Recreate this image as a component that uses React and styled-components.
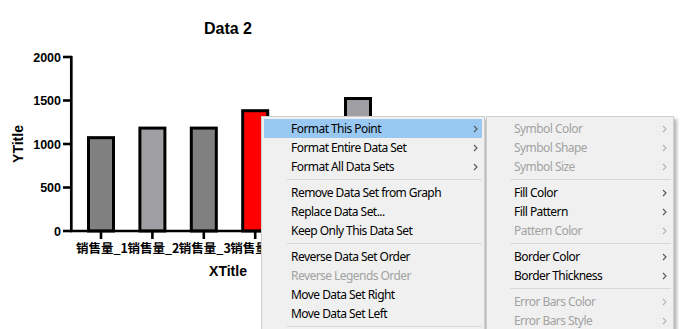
import React from "react"
import styled, { createGlobalStyle } from "styled-components"

const GlobalStyle = createGlobalStyle`
  html, body {
    margin: 0;
    padding: 0;
    background: #ffffff;
  }
`

const Stage = styled.div`
  position: relative;
  width: 680px;
  height: 329px;
  overflow: hidden;
  background: #ffffff;
`

const ChartSvg = styled.svg`
  display: block;
  font-family: "Liberation Sans", Arial, "Noto Sans CJK SC", sans-serif;
  font-weight: bold;
`

const Menu = styled.ul`
  position: absolute;
  top: ${(p) => p.$top}px;
  left: ${(p) => p.$left}px;
  width: ${(p) => p.$width}px;
  margin: 0;
  padding: 2px 2px 30px;
  list-style: none;
  box-sizing: border-box;
  background: #f0f0f0;
  border: 1px solid #cfcfcf;
  box-shadow: 3px 3px 3px rgba(0, 0, 0, 0.28);
  font-family: "Noto Sans", "Open Sans", sans-serif;
  font-size: 12px;
  letter-spacing: -0.55px;
`

const Item = styled.li`
  display: flex;
  align-items: center;
  justify-content: space-between;
  height: 19px;
  padding: 0 4px 0 ${(p) => p.$indent}px;
  color: ${(p) => (p.$disabled ? "#a2a2a2" : "#000000")};
  background: ${(p) => (p.$active ? "#99c9f3" : "transparent")};
  white-space: nowrap;
`

const Separator = styled.li`
  height: 1px;
  margin: 3px 0 3px ${(p) => p.$indent}px;
  background: #d9d9d9;
`

const Chevron = ({ disabled }) => (
  <svg width="5" height="8" viewBox="0 0 5 8">
    <path
      d="M1 1 L4 4 L1 7"
      fill="none"
      stroke={disabled ? "#b4b4b4" : "#555555"}
      strokeWidth="1.1"
    />
  </svg>
)

const yScale = (v) => 231 - v * 0.087

// the last two bars sit behind the context menu, their labels are hidden
const bars = [
  { label: "销售量_1", value: 1090, fill: "#808080" },
  { label: "销售量_2", value: 1200, fill: "#a0a0a4" },
  { label: "销售量_3", value: 1200, fill: "#808080" },
  { label: "销售量_4", value: 1400, fill: "#ff0000" },
  { value: 1000, fill: "#808080" },
  { value: 1540, fill: "#a0a0a4" },
]

function Chart() {
  const ticks = [0, 500, 1000, 1500, 2000]
  return (
    <ChartSvg width="680" height="329">
      <text x="228" y="34" fontSize="16" textAnchor="middle">
        Data 2
      </text>
      <text
        x="0"
        y="0"
        fontSize="14"
        textAnchor="middle"
        transform="translate(23 144) rotate(-90)"
      >
        YTitle
      </text>
      {ticks.map((t) => (
        <g key={t}>
          <line x1="63" x2="72" y1={yScale(t)} y2={yScale(t)} stroke="#000" strokeWidth="2.6" />
          <text x="61" y={yScale(t) + 4.5} fontSize="12.5" textAnchor="end">
            {t}
          </text>
        </g>
      ))}
      {bars.map((b, i) => {
        const cx = 101 + i * 51.4
        const top = yScale(b.value)
        return (
          <g key={i}>
            <rect
              x={cx - 12.5}
              y={top + 1.5}
              width="25"
              height={231 - top - 1.5}
              fill={b.fill}
              stroke="#000"
              strokeWidth="3"
            />
            <line x1={cx} x2={cx} y1="231" y2="239" stroke="#000" strokeWidth="2.6" />
            {b.label && (
              <text
                x={cx + 1}
                y="253"
                fontSize="12.5"
                textAnchor="middle"
                fontFamily='"Noto Sans CJK SC", "Liberation Sans", sans-serif'
              >
                {b.label}
              </text>
            )}
          </g>
        )
      })}
      <line x1="71.3" x2="71.3" y1="56" y2="232" stroke="#000" strokeWidth="2.7" />
      <line x1="70" x2="420" y1="231" y2="231" stroke="#000" strokeWidth="2.7" />
      <text x="228" y="276" fontSize="14" textAnchor="middle">
        XTitle
      </text>
    </ChartSvg>
  )
}

const mainMenu = [
  { label: "Format This Point", sub: true, active: true },
  { label: "Format Entire Data Set", sub: true },
  { label: "Format All Data Sets", sub: true },
  "sep",
  { label: "Remove Data Set from Graph" },
  { label: "Replace Data Set..." },
  { label: "Keep Only This Data Set" },
  "sep",
  { label: "Reverse Data Set Order" },
  { label: "Reverse Legends Order", disabled: true },
  { label: "Move Data Set Right" },
  { label: "Move Data Set Left" },
  "sep",
]

const subMenu = [
  { label: "Symbol Color", sub: true, disabled: true },
  { label: "Symbol Shape", sub: true, disabled: true },
  { label: "Symbol Size", sub: true, disabled: true },
  "sep",
  { label: "Fill Color", sub: true },
  { label: "Fill Pattern", sub: true },
  { label: "Pattern Color", sub: true, disabled: true },
  "sep",
  { label: "Border Color", sub: true },
  { label: "Border Thickness", sub: true },
  "sep",
  { label: "Error Bars Color", sub: true, disabled: true },
  { label: "Error Bars Style", sub: true, disabled: true },
]

function ContextMenu({ items, left, top, width, indent }) {
  return (
    <Menu $left={left} $top={top} $width={width}>
      {items.map((it, i) =>
        it === "sep" ? (
          <Separator key={i} $indent={indent - 4} />
        ) : (
          <Item key={i} $indent={indent} $disabled={it.disabled} $active={it.active}>
            <span>{it.label}</span>
            {it.sub && <Chevron disabled={it.disabled} />}
          </Item>
        )
      )}
    </Menu>
  )
}

export default function App() {
  return (
    <Stage>
      <GlobalStyle />
      <Chart />
      <ContextMenu items={mainMenu} left={261} top={116} width={224} indent={27} />
      <ContextMenu items={subMenu} left={486} top={116} width={188} indent={25} />
    </Stage>
  )
}
